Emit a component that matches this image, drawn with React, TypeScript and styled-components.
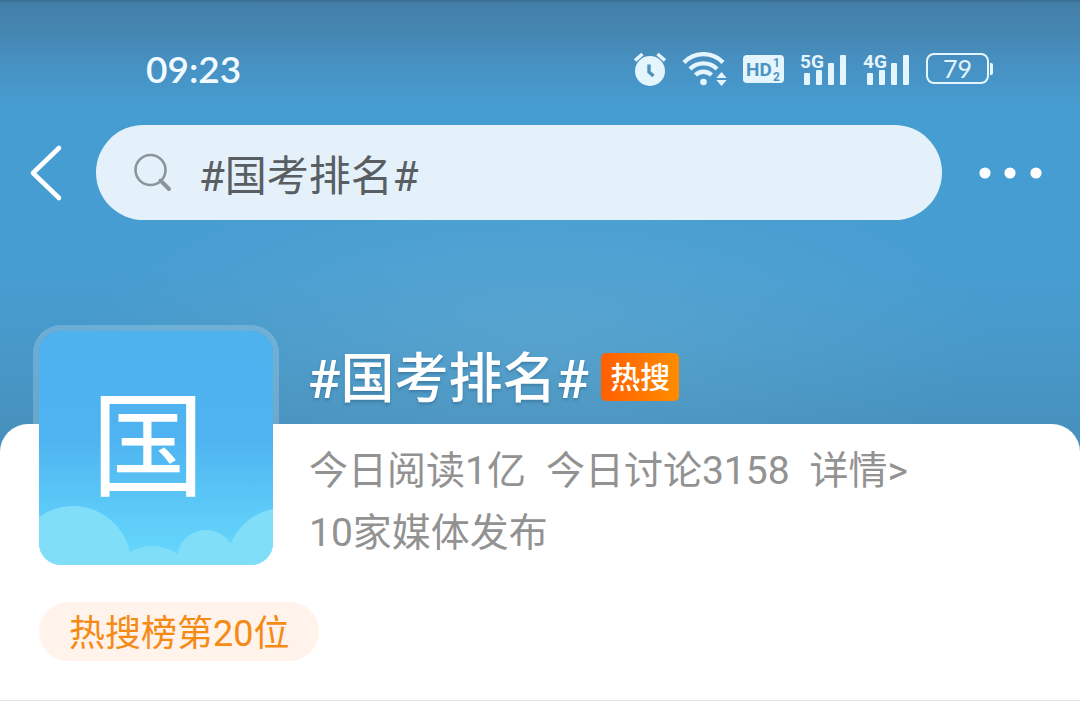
import React from "react";
import styled, { createGlobalStyle } from "styled-components";

const GlobalStyle = createGlobalStyle`
  * { box-sizing: border-box; }
  body {
    margin: 0;
    background: #fff;
    font-family: Roboto, "Noto Sans CJK SC", sans-serif;
  }
  button, input { font: inherit; }
`;

const Page = styled.div`
  background:
    radial-gradient(
      ellipse 460px 170px at 50% 330px,
      rgba(125, 185, 215, 0.3),
      rgba(125, 185, 215, 0)
    ),
    linear-gradient(
      180deg,
      #38698a 0px,
      #437fa8 3px,
      #4586b1 30px,
      #4791c3 65px,
      #469dd1 110px,
      #469dd1 270px,
      #4799ca 340px,
      #4791be 424px,
      #4791be 100%
    );
`;

const StatusBar = styled.div`
  display: flex;
  align-items: center;
  justify-content: space-between;
  height: 125px;
  padding: 12px 87px 0 146px;
  color: #f2fbff;
`;

const Clock = styled.time`
  font-family: Lato, sans-serif;
  font-size: 37px;
  font-weight: 600;
  line-height: 44px;
`;

const StatusIcons = styled.div`
  display: flex;
  align-items: center;
  gap: 16px;
  color: #e4f5fd;

  svg { display: block; }
`;

const Battery = styled.div`
  display: flex;
  align-items: center;
`;

const BatteryBody = styled.div`
  display: flex;
  align-items: center;
  justify-content: center;
  width: 63px;
  height: 31px;
  border: 2px solid currentColor;
  border-radius: 8px;
  font-family: Lato, sans-serif;
  font-size: 25px;
  line-height: 27px;
`;

const BatteryTip = styled.div`
  width: 3px;
  height: 12px;
  margin-left: 1px;
  border-radius: 0 2px 2px 0;
  background: currentColor;
`;

const SearchRow = styled.form`
  display: flex;
  align-items: center;
  padding: 0 36px 0 28px;
`;

const IconButton = styled.button`
  display: flex;
  padding: 0;
  border: 0;
  background: none;
  color: #fff;
  cursor: pointer;
`;

const SearchBox = styled.label`
  display: flex;
  align-items: center;
  flex: 1;
  gap: 26px;
  height: 95px;
  margin: 0 34px 0 32px;
  padding: 0 37px;
  border-radius: 48px;
  background: #e5f1fa;
`;

const SearchInput = styled.input`
  flex: 1;
  min-width: 0;
  height: 60px;
  padding: 0;
  border: 0;
  outline: 0;
  background: none;
  color: #585e62;
  font-size: 42px;
`;

const TitleRow = styled.div`
  display: flex;
  align-items: center;
  gap: 12px;
  height: 204px;
  padding: 110px 39px 0 308px;
`;

const Title = styled.h1`
  margin: 0;
  padding-top: 6px;
  color: #fff;
  font-size: 54px;
  font-weight: 500;
  line-height: 64px;
  text-shadow: 0 2px 3px rgba(30, 70, 100, 0.35);
`;

const HotBadge = styled.span`
  padding: 2px 9px 0;
  border-radius: 5px;
  background: linear-gradient(90deg, #ff5f00, #ff8c00);
  color: #fff;
  font-size: 30px;
  font-weight: 500;
  line-height: 46px;
`;

const Sheet = styled.main`
  padding: 0 39px 39px;
  border-bottom: 1px solid #e3e3e3;
  border-radius: 28px 28px 0 0;
  background: #fff;
`;

const Summary = styled.section`
  display: flex;
  align-items: flex-start;
  gap: 36px;
`;

const Cover = styled.div`
  position: relative;
  flex: none;
  width: 234px;
  height: 234px;
  margin-top: -93px;
  padding-right: 16px;
  border-radius: 22px;
  background: linear-gradient(180deg, #4eb2ef 0%, #4eb3f0 45%, #60d0fa 85%, #66d8fc 100%);
  box-shadow: 0 0 0 6px rgba(255, 255, 255, 0.2);
  color: #fff;
  font-size: 114px;
  line-height: 234px;
  text-align: center;
`;

const Clouds = styled.svg`
  position: absolute;
  left: 0;
  bottom: 0;
  border-radius: 0 0 22px 22px;
`;

const Info = styled.div`
  padding-top: 16px;
  color: #929292;
  font-size: 39px;
  line-height: 62px;
`;

const Stats = styled.div`
  display: flex;
  gap: 20px;
`;

const DetailLink = styled.a`
  color: inherit;
  text-decoration: none;
`;

const RankChip = styled.a`
  display: inline-block;
  margin-top: 37px;
  padding: 5px 30px 0;
  border-radius: 30px;
  background: #fff3eb;
  color: #f58a14;
  font-size: 36px;
  line-height: 54px;
  text-decoration: none;
  vertical-align: top;
`;

const AlarmIcon = () => (
  <svg width="33" height="34" viewBox="0 0 33 34" aria-hidden="true">
    <circle cx="17" cy="19" r="15" fill="currentColor" />
    <path d="M2 8.500 9.500 2M32 8.500 24.500 2" stroke="currentColor" strokeWidth="3.6" fill="none" />
    <path d="M16 12.500v7.500l4.500 4" stroke="#4f92bd" strokeWidth="3.4" fill="none" />
  </svg>
);

const WifiIcon = () => (
  <svg width="45" height="34" viewBox="0 0 45 34" aria-hidden="true">
    <g fill="none" stroke="currentColor" strokeWidth="4.400">
      <path d="M2 10.500A27 27 0 0 1 41 10.500" />
      <path d="M8 17A19 19 0 0 1 35 17" />
      <path d="M13.500 23A11.500 11.500 0 0 1 29.500 23" />
    </g>
    <circle cx="21.500" cy="30" r="3.300" fill="currentColor" />
    <path d="M39.500 20l5.200 6H34.300zM39.500 34l5.200-6H34.300z" fill="currentColor" />
  </svg>
);

const HdIcon = () => (
  <svg width="41" height="28" viewBox="0 0 41 28" aria-hidden="true">
    <rect width="41" height="28" rx="4" fill="currentColor" />
    <g fill="#4d93c1" fontFamily="Roboto, sans-serif" fontWeight="700">
      <text x="3" y="21" fontSize="19">HD</text>
      <text x="30" y="12" fontSize="12">1</text>
      <text x="30" y="26" fontSize="12">2</text>
    </g>
  </svg>
);

const SignalIcon = ({ label }: { label: string }) => (
  <svg width="47" height="42" viewBox="0 -4 47 42" aria-label={label}>
    <text x="0" y="16" fontSize="19" fontWeight="700" fontFamily="Roboto, sans-serif" fill="currentColor">
      {label}
    </text>
    <g fill="currentColor">
      <rect x="4" y="21" width="6" height="12" rx="1" />
      <rect x="16" y="18" width="6" height="15" rx="1" />
      <rect x="28" y="11" width="6" height="22" rx="1" />
      <rect x="40" y="3" width="6" height="30" rx="1" />
    </g>
  </svg>
);

const BackIcon = () => (
  <svg width="36" height="60" viewBox="0 0 36 60" fill="none" aria-hidden="true">
    <path d="M31 5 5 30 31 55" stroke="currentColor" strokeWidth="4.600" strokeLinecap="round" strokeLinejoin="round" />
  </svg>
);

const SearchIcon = () => (
  <svg width="40" height="40" viewBox="0 0 40 40" fill="none" stroke="#8b959c" aria-hidden="true">
    <circle cx="17.500" cy="17" r="15" strokeWidth="2.600" />
    <path d="M27.500 27.500 36 36" strokeWidth="4" strokeLinecap="round" />
  </svg>
);

const MoreIcon = () => (
  <svg width="68" height="12" viewBox="0 0 68 12" fill="currentColor" aria-hidden="true">
    <circle cx="9" cy="6" r="5.600" />
    <circle cx="34" cy="6" r="5.600" />
    <circle cx="60" cy="6" r="5.600" />
  </svg>
);

export default function App() {
  return (
    <>
      <GlobalStyle />
      <Page>
        <header>
          <StatusBar>
            <Clock>09:23</Clock>
            <StatusIcons>
              <AlarmIcon />
              <WifiIcon />
              <HdIcon />
              <SignalIcon label="5G" />
              <SignalIcon label="4G" />
              <Battery>
                <BatteryBody>79</BatteryBody>
                <BatteryTip />
              </Battery>
            </StatusIcons>
          </StatusBar>
          <SearchRow role="search" onSubmit={(e) => e.preventDefault()}>
            <IconButton type="button" aria-label="返回">
              <BackIcon />
            </IconButton>
            <SearchBox>
              <SearchIcon />
              <SearchInput type="text" aria-label="搜索" defaultValue="#国考排名#" />
            </SearchBox>
            <IconButton type="button" aria-label="更多">
              <MoreIcon />
            </IconButton>
          </SearchRow>
          <TitleRow>
            <Title>#国考排名#</Title>
            <HotBadge>热搜</HotBadge>
          </TitleRow>
        </header>
        <Sheet>
          <Summary>
            <Cover>
              <Clouds width="234" height="60" viewBox="0 174 234 60" fill="#80def9" aria-hidden="true">
                <circle cx="34" cy="233" r="58" />
                <circle cx="113" cy="260" r="45" />
                <circle cx="167" cy="228" r="29" />
                <circle cx="245" cy="235" r="58" />
              </Clouds>
              国
            </Cover>
            <Info>
              <Stats>
                <span>今日阅读1亿</span>
                <span>今日讨论3158</span>
                <DetailLink href="#detail">详情&gt;</DetailLink>
              </Stats>
              <div>10家媒体发布</div>
            </Info>
          </Summary>
          <RankChip href="#rank">热搜榜第20位</RankChip>
        </Sheet>
      </Page>
    </>
  );
}
